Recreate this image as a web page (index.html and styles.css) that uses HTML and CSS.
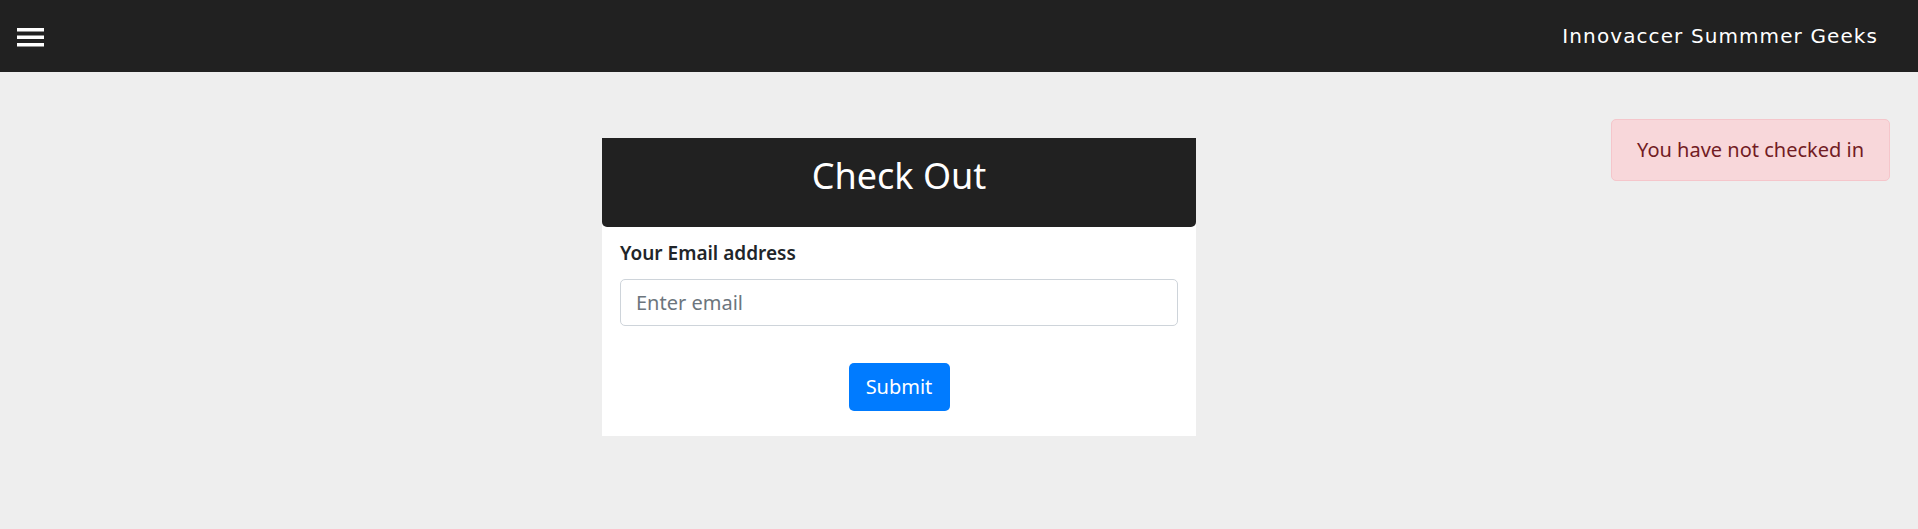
FILE: index.html
```html
<!DOCTYPE html>
<html lang="en">
<head>
<meta charset="utf-8">
<title>Check Out</title>
<link rel="stylesheet" href="styles.css">
</head>
<body>
<header class="navbar">
  <button class="menu-btn" aria-label="Menu">
    <svg width="27" height="19" viewBox="0 0 27 19"><rect x="0" y="0" width="27" height="3.5" fill="#fff"/><rect x="0" y="7.5" width="27" height="3.5" fill="#fff"/><rect x="0" y="15" width="27" height="3.5" fill="#fff"/></svg>
  </button>
  <div class="brand">Innovaccer Summmer Geeks</div>
</header>
<main class="page">
  <section class="card">
    <div class="card-header">Check Out</div>
    <form class="card-body">
      <label class="field-label" for="email">Your Email address</label>
      <input class="field-input" id="email" type="email" placeholder="Enter email">
      <div class="actions"><button class="btn-submit" type="button">Submit</button></div>
    </form>
  </section>
  <div class="alert">You have not checked in</div>
</main>
</body>
</html>
```
FILE: styles.css
```css
html, body {
  margin: 0;
  padding: 0;
}
body {
  background: #eeeeee;
  font-family: "Noto Sans", "Open Sans", sans-serif;
  color: #212529;
}
.navbar {
  display: flex;
  align-items: center;
  justify-content: space-between;
  height: 72px;
  box-sizing: border-box;
  background: #212121;
  padding: 0 40px 0 17px;
}
.menu-btn {
  background: none;
  border: 0;
  padding: 0;
  margin-top: 2px;
  display: flex;
}
.brand {
  font-family: "DejaVu Sans", Verdana, sans-serif;
  font-size: 20px;
  letter-spacing: 1.1px;
  color: #ffffff;
}
.page {
  display: grid;
  grid-template-columns: 602px 594px 1fr auto;
  align-items: start;
  padding-right: 28px;
}
.card {
  grid-column: 2;
  margin-top: 66px;
  background: #ffffff;
}
.card-header {
  background: #212121;
  height: 89px;
  border-radius: 0 0 5px 5px;
  color: #ffffff;
  font-size: 36px;
  display: flex;
  align-items: center;
  justify-content: center;
  padding-bottom: 14px;
  box-sizing: border-box;
}
.card-body {
  padding: 12px 18px 25px 18px;
  margin: 0;
}
.field-label {
  display: block;
  font-size: 19px;
  font-weight: 600;
  line-height: 28px;
  margin-bottom: 12px;
  color: #212529;
}
.field-input {
  display: block;
  width: 100%;
  box-sizing: border-box;
  height: 47px;
  border: 1px solid #ced4da;
  border-radius: 5px;
  padding: 0 15px;
  font-family: inherit;
  font-size: 20px;
  color: #495057;
  background: #fff;
}
.field-input::placeholder {
  color: #6c757d;
}
.actions {
  display: flex;
  justify-content: center;
  margin-top: 37px;
}
.btn-submit {
  width: 101px;
  height: 48px;
  background: #007bff;
  color: #ffffff;
  border: 0;
  border-radius: 5px;
  font-family: inherit;
  font-size: 20px;
  padding: 0 0 2px;
}
.alert {
  grid-column: 4;
  margin-top: 47px;
  padding: 15px 25px;
  border: 1px solid #f5c6cb;
  background: #f8d7da;
  color: #721c24;
  border-radius: 5px;
  font-size: 20px;
  line-height: 30px;
}
```
